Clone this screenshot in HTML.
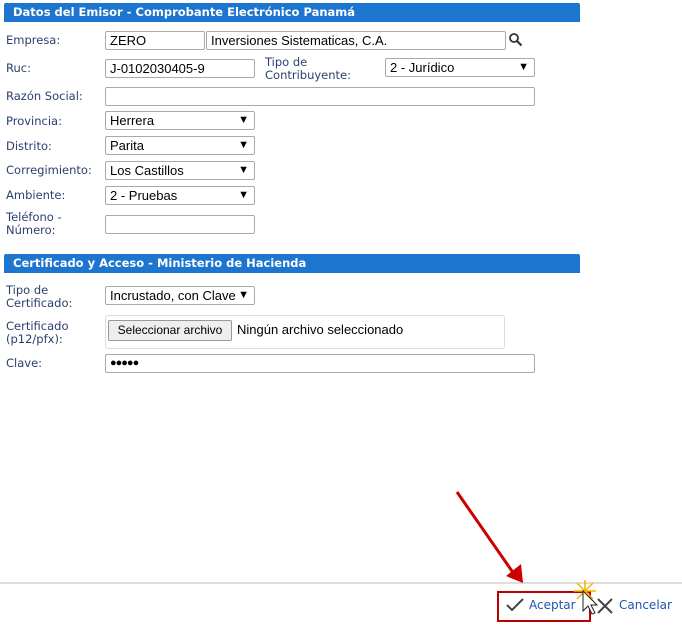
<!DOCTYPE html>
<html><head><meta charset="utf-8"><style>
body{margin:0;width:682px;height:626px;background:#fff;position:relative;overflow:hidden;font-family:"DejaVu Sans","Liberation Sans",sans-serif;}
.a{position:absolute}
.hd{position:absolute;left:4px;width:576px;height:19px;background:#1c76d0;color:#fff;font-weight:bold;font-size:11.5px;line-height:19px;padding-left:9px;box-sizing:border-box;border-radius:2px 2px 0 0}
.l{position:absolute;left:6px;color:#2b3f6e;font-size:11.5px;line-height:13px}
.in{position:absolute;border:1px solid #a9a9a9;box-sizing:border-box;height:19px;font-family:"Liberation Sans",sans-serif;font-size:13px;line-height:17px;padding-left:4px;color:#000;background:#fff;border-radius:2px}
.sel:after{content:"▼";position:absolute;right:5px;top:0;font-size:11px;background:#fff}
</style></head><body>
<div class="hd" style="top:3px">Datos del Emisor - Comprobante Electrónico Panamá</div>
<div class="l" style="top:34px">Empresa:</div>
<div class="in" style="left:105px;top:31px;width:100px">ZERO</div>
<div class="in" style="left:206px;top:31px;width:300px">Inversiones Sistematicas, C.A.</div>
<svg class="a" style="left:508px;top:32px" width="15" height="15" viewBox="0 0 15 15"><circle cx="6" cy="6" r="4" fill="none" stroke="#333" stroke-width="1.8"/><path d="M9 9l4.5 4.5" stroke="#333" stroke-width="2.2"/></svg>
<div class="l" style="top:62px">Ruc:</div>
<div class="in" style="left:105px;top:59px;width:150px">J-0102030405-9</div>
<div class="l" style="left:265px;top:56px">Tipo de<br>Contribuyente:</div>
<div class="in sel" style="left:385px;top:58px;width:150px">2 - Jurídico</div>
<div class="l" style="top:90px">Razón Social:</div>
<div class="in" style="left:105px;top:87px;width:430px"></div>
<div class="l" style="top:115px">Provincia:</div>
<div class="in sel" style="left:105px;top:111px;width:150px">Herrera</div>
<div class="l" style="top:140px">Distrito:</div>
<div class="in sel" style="left:105px;top:136px;width:150px">Parita</div>
<div class="l" style="top:164px">Corregimiento:</div>
<div class="in sel" style="left:105px;top:161px;width:150px">Los Castillos</div>
<div class="l" style="top:189px">Ambiente:</div>
<div class="in sel" style="left:105px;top:186px;width:150px">2 - Pruebas</div>
<div class="l" style="top:211px">Teléfono -<br>Número:</div>
<div class="in" style="left:105px;top:215px;width:150px"></div>
<div class="hd" style="top:254px">Certificado y Acceso - Ministerio de Hacienda</div>
<div class="l" style="top:284px">Tipo de<br>Certificado:</div>
<div class="in sel" style="left:105px;top:286px;width:150px;overflow:hidden;white-space:nowrap">Incrustado, con Clave</div>
<div class="l" style="top:320px">Certificado<br>(p12/pfx):</div>
<div class="a" style="left:105px;top:315px;width:400px;height:34px;border:1px solid #ddd;box-sizing:border-box;border-radius:3px"></div>
<div class="a" style="left:108px;top:320px;width:124px;height:21px;border:1px solid #999;box-sizing:border-box;background:#eee;border-radius:2px;font-family:'Liberation Sans',sans-serif;font-size:12px;line-height:19px;text-align:center">Seleccionar archivo</div>
<div class="a" style="left:237px;top:322px;font-family:'Liberation Sans',sans-serif;font-size:13px">Ningún archivo seleccionado</div>
<div class="l" style="top:357px">Clave:</div>
<div class="in" style="left:105px;top:354px;width:430px;font-size:11px;letter-spacing:-1px">●●●●●</div>
<div class="a" style="left:0;top:582px;width:682px;height:2px;background:#ddd"></div>
<svg class="a" style="left:0;top:0" width="682" height="626"><path d="M457 492L514 574" stroke="#c00" stroke-width="3"/><path d="M506 576L523 583L521 564Z" fill="#c00"/></svg>
<div class="a" style="left:497px;top:591px;width:94px;height:31px;border:2px solid #b00;box-sizing:border-box"></div>
<svg class="a" style="left:506px;top:598px" width="18" height="14"><path d="M1 7l5 5L17 1" fill="none" stroke="#444" stroke-width="2"/></svg>
<div class="a" style="left:529px;top:598px;color:#1f55b0;font-size:12px">Aceptar</div>
<svg class="a" style="left:596px;top:597px" width="18" height="18"><path d="M2 2l14 14M16 2L2 16" stroke="#444" stroke-width="2"/></svg>
<div class="a" style="left:619px;top:598px;color:#1f55b0;font-size:12px">Cancelar</div>
<svg class="a" style="left:570px;top:578px" width="30" height="40"><g stroke="#f0b400" stroke-width="1.5"><path d="M15 2v22M4 13h22M7 5l16 16M23 5L7 21"/></g><path d="M13 13v20l5-5 4 8 3-1-4-8h6z" fill="#fff" stroke="#222" stroke-width="1"/></svg>
</body></html>
